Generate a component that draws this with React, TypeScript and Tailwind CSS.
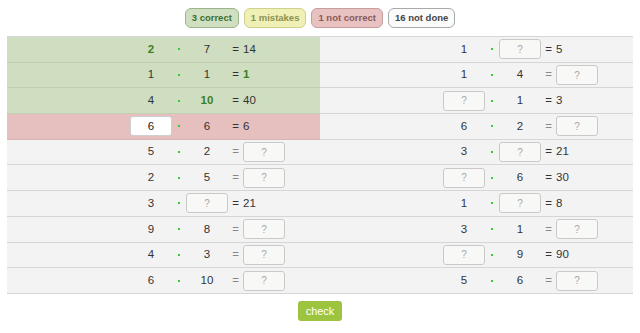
import React from "react";

type Slot = { v: string; kind?: "bold" | "input" | "filled" };
type Row = { a: Slot; b: Slot; r: Slot; bg: "green" | "pink" | "gray" };

const n = (v: string): Slot => ({ v });
const B = (v: string): Slot => ({ v, kind: "bold" });
const Q: Slot = { v: "?", kind: "input" };
const F = (v: string): Slot => ({ v, kind: "filled" });

const left: Row[] = [
  { a: B("2"), b: n("7"), r: n("14"), bg: "green" },
  { a: n("1"), b: n("1"), r: B("1"), bg: "green" },
  { a: n("4"), b: B("10"), r: n("40"), bg: "green" },
  { a: F("6"), b: n("6"), r: n("6"), bg: "pink" },
  { a: n("5"), b: n("2"), r: Q, bg: "gray" },
  { a: n("2"), b: n("5"), r: Q, bg: "gray" },
  { a: n("3"), b: Q, r: n("21"), bg: "gray" },
  { a: n("9"), b: n("8"), r: Q, bg: "gray" },
  { a: n("4"), b: n("3"), r: Q, bg: "gray" },
  { a: n("6"), b: n("10"), r: Q, bg: "gray" },
];

const right: Row[] = [
  { a: n("1"), b: Q, r: n("5"), bg: "gray" },
  { a: n("1"), b: n("4"), r: Q, bg: "gray" },
  { a: Q, b: n("1"), r: n("3"), bg: "gray" },
  { a: n("6"), b: n("2"), r: Q, bg: "gray" },
  { a: n("3"), b: Q, r: n("21"), bg: "gray" },
  { a: Q, b: n("6"), r: n("30"), bg: "gray" },
  { a: n("1"), b: Q, r: n("8"), bg: "gray" },
  { a: n("3"), b: n("1"), r: Q, bg: "gray" },
  { a: Q, b: n("9"), r: n("90"), bg: "gray" },
  { a: n("5"), b: n("6"), r: Q, bg: "gray" },
];

function Box({ s }: { s: Slot }) {
  if (s.kind === "input")
    return (
      <div className="w-[42px] h-[20px] rounded-[3px] border border-[#c9c9c9] bg-[#f8f8f6] flex items-center justify-center text-[#a8a8a8] text-[10px]">
        ?
      </div>
    );
  if (s.kind === "filled")
    return (
      <div className="w-[42px] h-[20px] rounded-[3px] border border-[#cfcfcf] bg-white flex items-center justify-center text-[#222]">
        {s.v}
      </div>
    );
  if (s.kind === "bold") return <span className="font-bold text-[#3f7f1f]">{s.v}</span>;
  return <span>{s.v}</span>;
}

function Cell({ row }: { row: Row }) {
  const bg =
    row.bg === "green"
      ? "bg-[#cfdec1] border-[#c0cfb2]"
      : row.bg === "pink"
      ? "bg-[#e6bfbf] border-[#d9b2b2]"
      : "bg-[#f3f3f3] border-[#d6d6d6]";
  const resultIsInput = row.r.kind === "input";
  return (
    <div className={`w-[313px] h-[25.7px] border-b flex items-center pl-[123px] text-[11.5px] text-[#333] ${bg}`}>
      <div className="w-[42px] flex justify-center">
        <Box s={row.a} />
      </div>
      <div className="w-[14px] flex justify-center">
        <div className="w-[2px] h-[2px] bg-[#2fd02f]" />
      </div>
      <div className="w-[42px] flex justify-center">
        <Box s={row.b} />
      </div>
      <div className={`w-[15px] flex justify-center ${resultIsInput ? "text-[#888]" : ""}`}>=</div>
      <div className="flex items-center">
        <Box s={row.r} />
      </div>
    </div>
  );
}

export default function App() {
  return (
    <div className="w-[640px] h-[333px] bg-white" style={{ fontFamily: '"Liberation Sans", Arial, sans-serif' }}>
      <div className="pt-[8px] flex justify-center gap-[5px] text-[9.5px] font-bold">
        <div className="h-[20px] px-[6px] flex items-center rounded-[6px] border border-[#9db58c] bg-[#cfdfc0] text-[#3f6e31]">
          3 correct
        </div>
        <div className="h-[20px] px-[6px] flex items-center rounded-[6px] border border-[#cfd28f] bg-[#eef0b6] text-[#8d9050]">
          1 mistakes
        </div>
        <div className="h-[20px] px-[6px] flex items-center rounded-[6px] border border-[#c79d9d] bg-[#e8c1c1] text-[#8a5a5a]">
          1 not correct
        </div>
        <div className="h-[20px] px-[6px] flex items-center rounded-[6px] border border-[#a9a9a9] bg-[#fbfbfb] text-[#444]">
          16 not done
        </div>
      </div>
      <div className="mt-[8px] ml-[7px] w-[626px] border-t border-[#d6d6d6] flex">
        <div className="flex flex-col">
          {left.map((r, i) => (
            <Cell key={i} row={r} />
          ))}
        </div>
        <div className="flex flex-col">
          {right.map((r, i) => (
            <Cell key={i} row={r} />
          ))}
        </div>
      </div>
      <div className="mt-[7px] flex justify-center">
        <button className="w-[44px] h-[20px] rounded-[3px] bg-[#9cc43f] text-white text-[11px]">check</button>
      </div>
    </div>
  );
}
